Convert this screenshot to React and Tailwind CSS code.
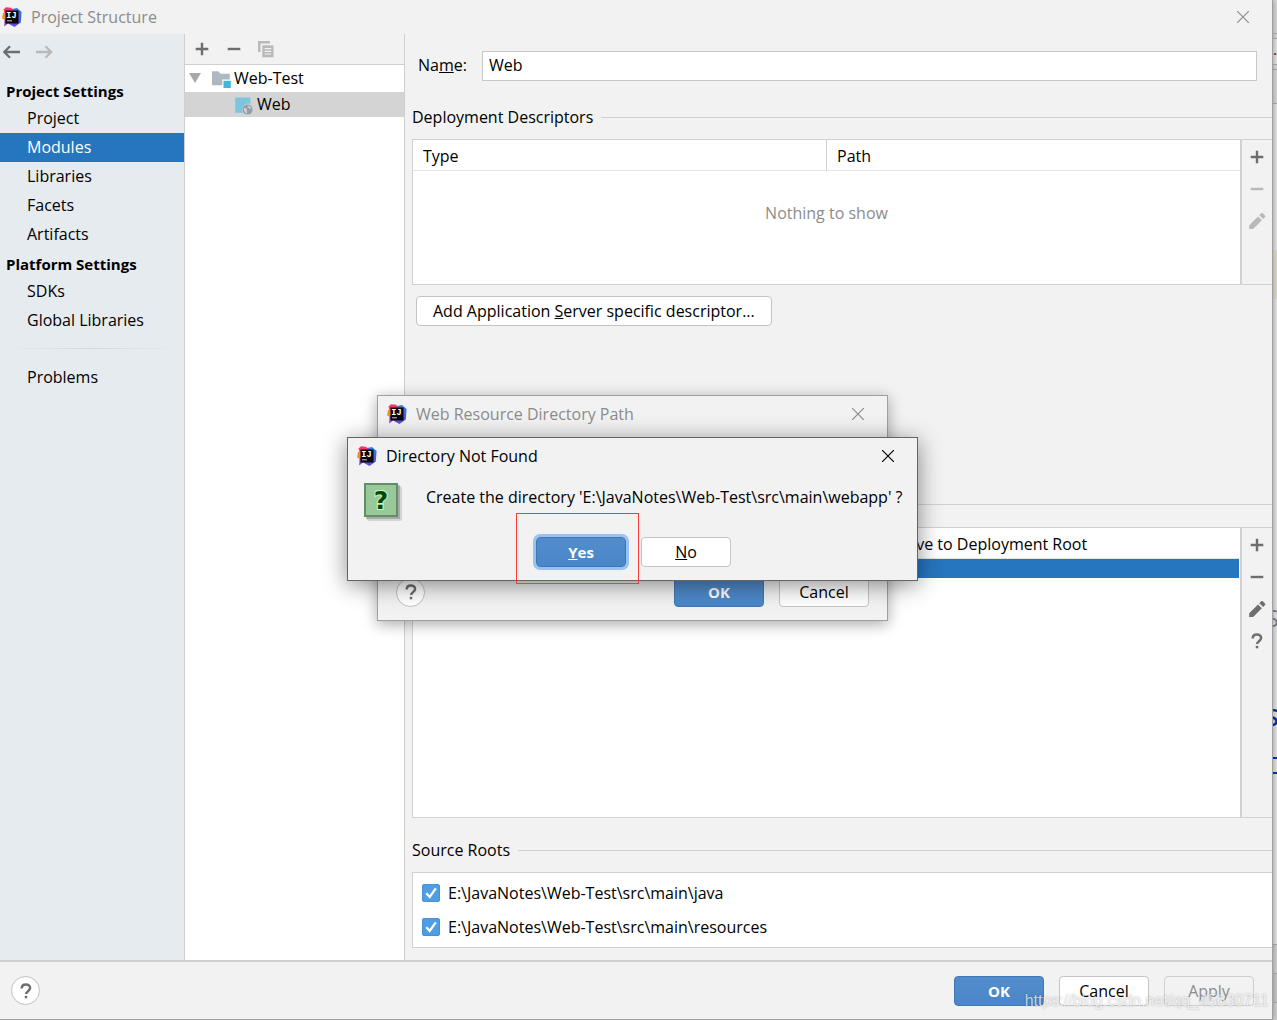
// App.jsx
import React, { useState } from 'react';

const settingsGroups = [
  { title: 'Project Settings', items: ['Project', 'Modules', 'Libraries', 'Facets', 'Artifacts'] },
  { title: 'Platform Settings', items: ['SDKs', 'Global Libraries'] },
];

/* ---------- Icons ---------- */

const IdeaLogo = () => (
  <svg className="w-5 h-5 shrink-0" viewBox="0 0 20 20">
    <defs>
      <linearGradient id="ideaBlue" x1="0" y1="0" x2="0" y2="1">
        <stop offset="0" stopColor="#2f7de8" />
        <stop offset="1" stopColor="#5b4be0" />
      </linearGradient>
      <linearGradient id="ideaPink" x1="0" y1="0" x2="0" y2="1">
        <stop offset="0" stopColor="#fe315d" />
        <stop offset="1" stopColor="#f0418a" />
      </linearGradient>
    </defs>
    <path d="M10 2 15 1l4.6 4-.8 10.5L12.5 20 7 17Z" fill="url(#ideaBlue)" />
    <path d="M1.5 2.5 4 .3l5 .4L12 4v8L4 12Z" fill="url(#ideaPink)" />
    <path d="M1 5.5 5 8v6L.2 11.500Z" fill="#f98b1c" />
    <path d="M2.500 12.500 5 10l6 7-5-.5L2.200 19.400Z" fill="#9a3fd0" />
    <rect x="3.5" y="3.5" width="13" height="13" fill="#0b0708" />
    <rect x="5" y="13.300" width="5" height="1" fill="#c8c8c8" />
    <text x="4.300" y="10.800" fontSize="8.500" fontWeight="700" fontFamily="Liberation Mono, monospace" fill="#fff">IJ</text>
  </svg>
);

const CloseIcon = () => (
  <svg className="w-3 h-3" viewBox="0 0 12 12" fill="none" stroke="currentColor" strokeWidth="1.2">
    <path d="M0 0l12 12M12 0L0 12" />
  </svg>
);

const PlusIcon = () => (
  <svg className="w-5 h-5" viewBox="0 0 20 20" fill="none" stroke="currentColor" strokeWidth="2.4">
    <path d="M10 3.7v12.6M3.7 10h12.6" />
  </svg>
);

const MinusIcon = () => (
  <svg className="w-5 h-5" viewBox="0 0 20 20" fill="none" stroke="currentColor" strokeWidth="2.4">
    <path d="M3.7 10h12.6" />
  </svg>
);

const PencilIcon = () => (
  <svg className="w-5 h-5" viewBox="0 0 20 20" fill="currentColor">
    <path d="M2.200 14.200 11 5.400l3.900 3.900-8.800 8.800H2.200z" />
    <path d="m12.300 4.200 1.900-1.900c.5-.5 1.100-.5 1.600 0l2.200 2.200c.5.5.5 1.100 0 1.600l-1.800 1.900z" />
  </svg>
);

const QuestionIcon = () => (
  <svg className="w-5 h-5" viewBox="0 0 20 20" fill="none" stroke="currentColor" strokeWidth="2.5">
    <path d="M5.700 7.400c0-2.500 1.800-4 4.200-4 2.500 0 4.200 1.400 4.200 3.600 0 3.200-4 3.200-4 6.100" />
    <path d="M10 14.800v2.500" />
  </svg>
);

const ArrowIcon = ({ back }) => (
  <svg className="w-5 h-5" viewBox="0 0 20 20" fill="none" stroke="currentColor" strokeWidth="2.3">
    {back ? <path d="M19 10H3.500M9 4.300 3.300 10 9 15.700" /> : <path d="M2 10h14.500M11.500 4.300l5.700 5.700-5.700 5.700" />}
  </svg>
);

const CopyIcon = () => (
  <svg className="w-5 h-5" viewBox="0 0 20 20">
    <path d="M3.300 13V3.300H14" fill="none" stroke="#b9b9b9" strokeWidth="2.4" />
    <rect x="6.3" y="6.3" width="11.2" height="12" fill="#b9b9b9" />
    <path d="M8.600 9.600h6.600M8.600 12.300h6.600M8.600 15h6.600" stroke="#f2f2f2" strokeWidth="1.2" />
  </svg>
);

const ModuleFolderIcon = () => (
  <svg className="w-5 h-5" viewBox="0 0 20 20">
    <path d="M1 2.300h6.300l2.200 2.500h9.300v5.700h-7.500v5.800H1z" fill="#aeb8c0" />
    <rect x="12.5" y="11.8" width="7.3" height="7.2" fill="#40b6e0" />
  </svg>
);

const WebFacetIcon = () => (
  <svg className="w-5 h-5" viewBox="0 0 20 20">
    <path d="M1.200 2.500h15.300v6.600a6 6 0 0 0-7.400 8.700H1.200z" fill="#7cc5de" />
    <circle cx="13.6" cy="14.6" r="5" fill="#93a0aa" />
    <path d="M10 13.400c1-.6 2.200-.3 2.600.6.4.8-.2 1.400.2 2.200l.3 2.200c-1.900-.4-3.400-2.600-3.100-5zM14 10.900c1.500 0 3 1 3.500 2.400l-2 .4-1-1.300-1.300.2z" fill="#d4d4d4" />
  </svg>
);

/* ---------- Controls ---------- */

const Button = ({ primary, focused, disabled, children }) => (
  <button
    disabled={disabled}
    className={`w-[90px] h-[30px] flex items-center justify-center rounded border text-base leading-6
      ${primary ? 'bg-linear-to-b from-[#528ccb] to-[#4a87c8] border-[#3f76b5] text-white text-[15px] font-bold' : ''}
      ${!primary && !disabled ? 'bg-white border-[#c4c4c4] text-black' : ''}
      ${disabled ? 'bg-transparent border-[#cfcfcf] text-[#8c8c8c]' : ''}
      ${focused ? 'ring-3 ring-[#97c3f3]' : ''}
    `}
  >
    {children}
  </button>
);

const HelpButton = () => (
  <button aria-label="Help" className="w-[29px] h-[29px] flex items-center justify-center rounded-full border border-[#c0c0c0] bg-white text-[#6e6e6e]">
    <QuestionIcon />
  </button>
);

const SectionTitle = ({ children }) => (
  <div className="flex items-center gap-2">
    <h2>{children}</h2>
    <div className="flex-1 h-px bg-[#d1d1d1]" />
  </div>
);

const TitleBar = ({ title, className, closeClass }) => (
  <div className={`flex items-center pl-[9px] ${className}`}>
    <IdeaLogo />
    <span className="flex-1 ml-[9px]">{title}</span>
    <button aria-label="Close" className={closeClass}>
      <CloseIcon />
    </button>
  </div>
);

const TableToolbar = ({ children }) => (
  <div className="w-[31px] shrink-0 flex flex-col items-center gap-3 pt-[7px] border-l border-[#d1d1d1] text-[#6e6e6e]">
    {children}
  </div>
);

const HeadCells = ({ first, second }) => (
  <thead>
    <tr className="h-[30px] border-b border-[#e3e3e3] text-left">
      <th className="w-1/2 px-[10px] pt-[3px] pb-0 font-normal border-r border-[#d1d1d1]">{first}</th>
      <th className="w-1/2 px-[10px] pt-[3px] pb-0 font-normal">{second}</th>
    </tr>
  </thead>
);

const SourceRoot = ({ path }) => {
  const [checked, setChecked] = useState(true);

  return (
    <label className="flex items-center gap-2">
      <span className="grid shrink-0">
        <input
          type="checkbox"
          checked={checked}
          onChange={(e) => setChecked(e.target.checked)}
          className="col-start-1 row-start-1 appearance-none w-[18px] h-[18px] rounded-xs border border-[#4a90d6] checked:bg-[#4f9ee3]"
        />
        {checked && (
          <svg className="col-start-1 row-start-1 w-[18px] h-[18px] pointer-events-none" viewBox="0 0 18 18" fill="none" stroke="#fff" strokeWidth="2.3">
            <path d="M4.300 9.200 7.700 13 13.800 4.400" />
          </svg>
        )}
      </span>
      {path}
    </label>
  );
};

/* ---------- Panels ---------- */

const Sidebar = ({ selected, onSelect }) => (
  <nav className="w-[185px] shrink-0 bg-[#e6ebf0] border-r border-[#cfcfcf]">
    <div className="h-9 flex items-center gap-[13px] pl-px mb-[6px]">
      <button aria-label="Back" className="text-[#6e6e6e]"><ArrowIcon back /></button>
      <button aria-label="Forward" className="text-[#b9b9b9]"><ArrowIcon /></button>
    </div>
    {settingsGroups.map((group) => (
      <div key={group.title}>
        <h2 className="h-7 leading-[30px] pl-[6px] text-[15px] font-bold">{group.title}</h2>
        {group.items.map((item) => (
          <button
            key={item}
            onClick={() => onSelect(item)}
            className={`block w-full h-[29px] pl-[27px] pb-[2px] text-left ${item === selected ? 'bg-[#2675bf] text-white' : ''}`}
          >
            {item}
          </button>
        ))}
      </div>
    ))}
    <div className="h-px mx-1 mt-[13px] mb-[14px] bg-linear-to-r from-transparent via-[#d3d6d9] to-transparent" />
    <button className="block w-full h-[29px] pl-[27px] pb-[2px] text-left">Problems</button>
  </nav>
);

const ModuleTree = () => (
  <div className="w-[220px] shrink-0 bg-white border-r border-[#cfcfcf]">
    <div className="h-[31px] flex items-center gap-3 pl-[7px] pb-px bg-[#f2f2f2] border-b border-[#cfcfcf] text-[#6e6e6e]">
      <button aria-label="Add"><PlusIcon /></button>
      <button aria-label="Remove"><MinusIcon /></button>
      <button aria-label="Copy"><CopyIcon /></button>
    </div>
    <ul>
      <li className="h-[27px] flex items-center pl-1">
        <svg className="w-3 h-3" viewBox="0 0 12 12" fill="#a8a8a8"><path d="M0 0h12L6 10z" /></svg>
        <span className="ml-[10px] mr-[3px]"><ModuleFolderIcon /></span>
        <span className="pb-[2px]">Web-Test</span>
      </li>
      <li className="h-[25px] flex items-center gap-[3px] pl-[49px] bg-[#d4d4d4]">
        <WebFacetIcon />
        <span className="pb-[2px]">Web</span>
      </li>
    </ul>
  </div>
);

const ModuleEditor = () => {
  const [name, setName] = useState('Web');

  return (
    <main className="flex-1 min-w-0 flex flex-col pl-[7px] pt-[17px] pb-3">
      <div className="flex items-center pl-[6px] pr-[15px]">
        <label htmlFor="module-name" className="w-16 pb-[2px]">Na<u>m</u>e:</label>
        <input
          id="module-name"
          type="text"
          value={name}
          onChange={(e) => setName(e.target.value)}
          className="flex-1 h-[30px] px-[6px] pb-[2px] bg-white border border-[#c8c8c8] focus:outline-none"
        />
      </div>

      <div className="mt-6 mb-[10px]"><SectionTitle>Deployment Descriptors</SectionTitle></div>
      <div className="h-[146px] flex border-y border-l border-[#d1d1d1]">
        <div className="flex-1 bg-white border-r border-[#d1d1d1]">
          <table className="w-full table-fixed border-collapse">
            <HeadCells first="Type" second="Path" />
            <tbody>
              <tr>
                <td colSpan={2} className="pt-[30px] text-center text-[#8c8c8c]">Nothing to show</td>
              </tr>
            </tbody>
          </table>
        </div>
        <TableToolbar>
          <button aria-label="Add descriptor"><PlusIcon /></button>
          <button aria-label="Remove descriptor" className="text-[#b9b9b9]"><MinusIcon /></button>
          <button aria-label="Edit descriptor" className="text-[#b9b9b9]"><PencilIcon /></button>
        </TableToolbar>
      </div>

      <button className="self-start ml-1 mt-[11px] h-[30px] px-4 flex items-center rounded border border-[#c4c4c4] bg-white">
        <span>Add Application <u>S</u>erver specific descriptor...</span>
      </button>

      <div className="mt-[166px] mb-[11px]"><SectionTitle>Web Resource Directories</SectionTitle></div>
      <div className="flex-1 flex border-y border-l border-[#d1d1d1]">
        <div className="flex-1 bg-white border-r border-[#d1d1d1] pr-px">
          <table className="w-full table-fixed border-collapse">
            <HeadCells first="Web Resource Directory" second="Path Relative to Deployment Root" />
            <tbody>
              <tr className="h-5 bg-[#2675bf]">
                <td className="p-0" />
                <td className="p-0" />
              </tr>
            </tbody>
          </table>
        </div>
        <TableToolbar>
          <button aria-label="Add directory"><PlusIcon /></button>
          <button aria-label="Remove directory"><MinusIcon /></button>
          <button aria-label="Edit directory"><PencilIcon /></button>
          <button aria-label="Directory help"><QuestionIcon /></button>
        </TableToolbar>
      </div>

      <div className="mt-5 mb-[10px]"><SectionTitle>Source Roots</SectionTitle></div>
      <div className="flex flex-col gap-[10px] pl-[9px] py-2 bg-white border-y border-l border-[#d1d1d1]">
        <SourceRoot path="E:\JavaNotes\Web-Test\src\main\java" />
        <SourceRoot path="E:\JavaNotes\Web-Test\src\main\resources" />
      </div>
    </main>
  );
};

/* ---------- Dialogs ---------- */

const ResourcePathDialog = () => (
  <div role="dialog" className="absolute left-[377px] top-[395px] w-[511px] h-[226px] flex flex-col justify-between bg-[#f2f2f2] border border-[#a0a0a0] shadow-[0_3px_14px_rgba(0,0,0,0.35)]">
    <TitleBar title="Web Resource Directory Path" className="h-9 pr-[23px] text-[#8c8c8c]" closeClass="text-[#8c8c8c]" />
    <div className="flex items-center gap-[15px] pl-[18px] pr-[18px] pb-[13px]">
      <HelpButton />
      <div className="flex-1" />
      <Button primary>OK</Button>
      <Button>Cancel</Button>
    </div>
  </div>
);

const NotFoundDialog = () => (
  <div role="dialog" className="absolute left-[347px] top-[437px] w-[571px] bg-[#f2f2f2] border border-[#646464] shadow-[0_4px_22px_rgba(0,0,0,0.45)]">
    <TitleBar title="Directory Not Found" className="h-9 pr-[23px]" closeClass="text-black" />
    <div className="flex items-start pl-4 pt-[9px]">
      <svg className="w-[38px] h-[38px] shrink-0" viewBox="0 0 38 38">
        <rect x="3" y="3" width="35" height="35" rx="2" fill="#000" opacity="0.12" />
        <rect x="2" y="2" width="34" height="34" fill="#000" opacity="0.2" />
        <rect x="1" y="1" width="32" height="32" fill="#99c999" stroke="#5f8f62" strokeWidth="2" />
        <text x="17" y="26" textAnchor="middle" fontSize="25" fontWeight="700" fontFamily="DejaVu Sans, sans-serif" fill="#064a06" stroke="#c9f5c4" strokeWidth="2" paintOrder="stroke">?</text>
      </svg>
      <p className="ml-6 pt-[2px]">Create the directory 'E:\JavaNotes\Web-Test\src\main\webapp' ?</p>
    </div>
    <div className="flex justify-center gap-[15px] pl-[2px] pt-4 pb-[13px]">
      <Button primary focused><span><u>Y</u>es</span></Button>
      <Button><span><u>N</u>o</span></Button>
    </div>
  </div>
);

// Slice of the editor window that stays visible at the right of the settings window
const EditorEdge = () => (
  <div className="relative w-1 shrink-0 overflow-hidden flex flex-col bg-[#e4e4e4]">
    <div className="h-[34px] bg-[#d8d8d8] border-b border-[#b0b0b0]" />
    <div className="h-[5px] bg-[#d8d8d8] border-b border-[#b0b0b0]" />
    <div className="h-[26px] border-b border-[#b0b0b0] leading-5 text-[#7a1010]">..</div>
    <div className="h-[5px] bg-[#d8d8d8] border-b border-[#b0b0b0]" />
    <div className="h-[34px] bg-[#d8d8d8] border-b border-[#b0b0b0]" />
    <div className="h-[146px]" />
    <div className="h-[49px] bg-[#dfddcb]" />
    <div className="flex-1" />
    <div className="h-[30px] bg-[#d0d0d0] border-y border-[#b0b0b0]" />
    <div className="h-[29px] bg-[#c8c8c8] border-b border-[#b0b0b0]" />
    <div className="h-[17px] bg-[#d0d0d0]" />
    <span className="absolute right-[-2px] top-[606px] text-2xl leading-6 text-[#808080]">S</span>
    <span className="absolute right-[-2px] top-[705px] text-2xl leading-6 font-semibold text-[#0033b3]">S</span>
    <div className="absolute -left-3 top-[757px] w-[20px] h-[17px] border-2 border-[#0033b3]" />
  </div>
);

const App = () => {
  const [selected, setSelected] = useState('Modules');

  return (
    <div className="relative min-h-screen flex overflow-hidden text-base leading-6 text-black font-['Open_Sans','Noto_Sans',sans-serif]">
      <div className="relative z-10 flex-1 min-w-0 flex flex-col bg-[#f2f2f2] border-r border-b border-[#a0a0a0] shadow-[0_0_6px_rgba(0,0,0,0.35)]">
        <TitleBar title="Project Structure" className="h-[34px] -ml-[7px] pr-[23px] text-[#8c8c8c]" closeClass="text-[#8c8c8c]" />
        <div className="flex-1 flex">
          <Sidebar selected={selected} onSelect={setSelected} />
          <ModuleTree />
          <ModuleEditor />
        </div>
        <footer className="h-[59px] flex items-center gap-[15px] pl-[11px] pr-[18px] border-t-2 border-[#cfcfcf]">
          <HelpButton />
          <div className="flex-1" />
          <Button primary>OK</Button>
          <Button>Cancel</Button>
          <Button disabled>Apply</Button>
        </footer>

        <ResourcePathDialog />
        <NotFoundDialog />
        {/* red mark around the Yes button */}
        <div className="absolute left-[516px] top-[513px] w-[123px] h-[71px] border border-[#fb3b3b] pointer-events-none" />
      </div>
      <EditorEdge />
      <span className="absolute z-20 right-2 bottom-[7px] text-base leading-6 text-white/70 [text-shadow:0_0_2px_rgba(0,0,0,0.3)] font-['Liberation_Sans',sans-serif] pointer-events-none">
        https://blog.csdn.net/qq_45630711
      </span>
    </div>
  );
};

export default App;
